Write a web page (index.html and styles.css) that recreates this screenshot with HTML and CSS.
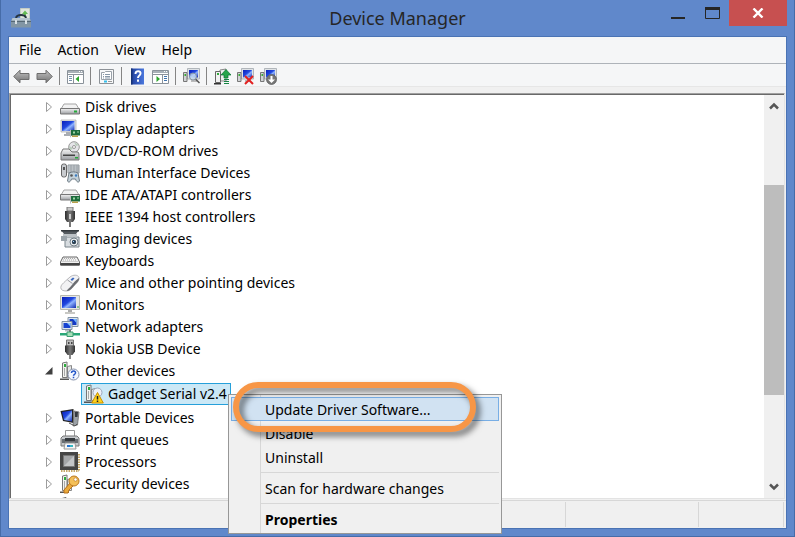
FILE: index.html
```html
<!DOCTYPE html>
<html lang="en">
<head>
<meta charset="utf-8">
<title>Device Manager</title>
<link rel="stylesheet" href="styles.css">
</head>
<body>
<svg class="sprite" aria-hidden="true">
  <defs>
    <linearGradient id="steel" x1="0" y1="0" x2="0" y2="1"><stop offset="0" stop-color="#f4f4f4"/><stop offset="1" stop-color="#9b9ea2"/></linearGradient>
    <linearGradient id="screen" x1="0" y1="0" x2="1" y2="1"><stop offset="0" stop-color="#0a1fb8"/><stop offset=".45" stop-color="#2148e0"/><stop offset=".6" stop-color="#8fb4ff"/><stop offset="1" stop-color="#1028b0"/></linearGradient>
    <linearGradient id="dark" x1="0" y1="0" x2="1" y2="0"><stop offset="0" stop-color="#2c2c2c"/><stop offset=".5" stop-color="#7a7a7a"/><stop offset="1" stop-color="#333"/></linearGradient>
    <linearGradient id="arrow" x1="0" y1="0" x2="0" y2="1"><stop offset="0" stop-color="#c2c2c2"/><stop offset="1" stop-color="#717171"/></linearGradient>
    <linearGradient id="book" x1="0" y1="0" x2="1" y2="0"><stop offset="0" stop-color="#203f9c"/><stop offset="1" stop-color="#4a77dd"/></linearGradient>
  </defs>
  <symbol id="i-closed" viewBox="0 0 8 12"><path d="M1.500 1.500v9L6.500 6z" fill="#fff" stroke="#9c9c9c"/></symbol>
  <symbol id="i-open" viewBox="0 0 8 12"><path d="M7.500 2v7.500H0z" fill="#404040"/></symbol>
  <symbol id="i-card" viewBox="0 0 10 8"><path d="M0 0h1v8H0z" fill="#bbb"/><path d="M1 .5h9v5.500H1z" fill="#1d6b3c"/><path d="M3 2h2v2H3zM7 2h2v1H7z" fill="#9fd8a8"/><path d="M2 6h6v1.500H2z" fill="#b9a04a"/></symbol>
  <symbol id="i-disk" viewBox="0 0 20 20"><path d="M4 7h12l3 5H1z" fill="#f3f3f3" stroke="#a5a5a5"/><path d="M.5 11.500h19V17H.5z" fill="url(#steel)" stroke="#777"/><path d="M14 13.500h3v2h-3z" fill="#25a93a"/></symbol>
  <symbol id="i-display" viewBox="0 0 20 20"><path d="M1 1h15v12H1z" fill="#e2e4e6" stroke="#aaa" stroke-width=".7"/><path d="M2 2h12.500v10H2z" fill="url(#screen)"/><path d="M6 13h4v2H6zM4 15h9v2H4z" fill="#a9adb2"/><use href="#i-card" x="10" y="10.500" width="10" height="8"/></symbol>
  <symbol id="i-dvd" viewBox="0 0 20 20"><circle cx="14" cy="6" r="5.300" fill="#e5e5e9" stroke="#999"/><path d="M14 1l2 4 3-1zM10 10l3-3-4-2z" fill="#b9cdbb"/><circle cx="14" cy="6" r="1.500" fill="#fff" stroke="#999"/><path d="M3 8h6l3 3h6l1 2v6H1v-7z" fill="url(#steel)" stroke="#777"/><path d="M3 13.500h12v1.500H3z" fill="#444"/><path d="M15 16h3v1.500h-3z" fill="#25a93a"/></symbol>
  <symbol id="i-hid" viewBox="0 0 20 20"><path d="M8 2h11v8H8z" fill="#d5dade" stroke="#8d9499"/><path d="M9 4h10M9 6h10M9 8h10M11 2v8M14 2v8M17 2v8" stroke="#8d9499" stroke-width=".7"/><rect x="1.500" y="1" width="5" height="13" rx="2" fill="#c9ccd0" stroke="#666"/><path d="M3 4h2v3H3z" fill="#555"/><path d="M9 10c3-1.500 6-1.500 9 0l1.500 8c-1 2-3 1-4-2h-4c-1 3-3 4-4 2z" fill="#c4d2da" stroke="#6f7b84"/><circle cx="11.500" cy="12.500" r="1.300" fill="#555"/><circle cx="16" cy="12.500" r="1.200" fill="#3b7dc0"/></symbol>
  <symbol id="i-ide" viewBox="0 0 20 20"><path d="M4 5h12l3 5H1z" fill="#f1f1f1" stroke="#a5a5a5"/><path d="M.5 9.500h19V15H.5z" fill="url(#steel)" stroke="#777"/><use href="#i-card" x="10" y="10" width="10" height="9"/></symbol>
  <symbol id="i-plug" viewBox="0 0 20 20"><path d="M6.500 1h7v6h-7z" fill="#bdbdbd" stroke="#777"/><path d="M8 3h1.500v2H8zM11 3h1.500v2H11z" fill="#444"/><path d="M5 6.500h10v6L12.500 16h-5L5 12.500z" fill="url(#dark)"/><path d="M9 16h2v4H9z" fill="#888"/></symbol>
  <symbol id="i-fire" viewBox="0 0 20 20"><path d="M7 0h6v4H7z" fill="#c7c7c7" stroke="#777"/><path d="M5 4h10v8l-2 3H7l-2-3z" fill="url(#dark)"/><path d="M9 7h2v5H9z" fill="#ccc"/><path d="M9 15h2v5H9z" fill="#777"/></symbol>
  <symbol id="i-camera" viewBox="0 0 20 20"><path d="M1 1h18l-3 4H4z" fill="#555b60"/><path d="M1 1h18v1.500H1z" fill="#343a3e"/><path d="M3 5h14v2H3z" fill="#bbc1c5"/><path d="M5 8h14v10H5z" fill="#d7dce0" stroke="#7b858c"/><path d="M1 7h6v5H1z" fill="#9ba4aa"/><circle cx="14" cy="13" r="4" fill="#f2f4f5" stroke="#737f87"/><circle cx="14" cy="13" r="2.200" fill="#2d4254"/><path d="M13 12h1v1h-1z" fill="#9bd1ff"/></symbol>
  <symbol id="i-keyboard" viewBox="0 0 20 20"><path d="M3 6h14l2.500 5v3H.5v-3z" fill="#f2f2f2" stroke="#666"/><path d="M.5 12h19v2.500H.5z" fill="#444"/><path d="M4 7.500h12M3 9h14M2.500 10.500h15" stroke="#aaa" stroke-dasharray="1 1"/></symbol>
  <symbol id="i-mouse" viewBox="0 0 20 20"><path d="M.8 14.500C.8 12 3 10.500 5.500 8L10 4c3-2.500 8-2.500 9 .5.800 2.800-3 6-5.500 9-1.800 2.200-4 4.500-7 4.500-3.500 0-5.700-1-5.700-3.500z" fill="#f2f2f4" stroke="#a6a6aa" stroke-width=".8"/><path d="M19 5c.8 2.800-3 5.500-5.500 8.500-2 2.500-4 4.500-7 4.500 1-2 3-3 5-5.500S15 7.500 19 5z" fill="#6b6d72"/><path d="M7.500 7l5 3.500" stroke="#9a9da3"/><path d="M10.500 6.500l2.500-2 1.500 1-2.500 2.500z" fill="#3b69bf"/></symbol>
  <symbol id="i-monitor" viewBox="0 0 20 20"><path d="M.5.500h19v14H.5z" fill="#e5e6e2" stroke="#b8b8b0"/><path d="M2 2h14v11H2z" fill="url(#screen)"/><path d="M17.500 11h1v2h-1z" fill="#2ea043"/><path d="M8 15h4v2H8z" fill="#aaa"/><path d="M5 17h10v2H5z" fill="#c8c8c4"/></symbol>
  <symbol id="i-network" viewBox="0 0 20 20"><path d="M8 .5h10v9H8z" fill="#dce5ee" stroke="#8192a4"/><path d="M9.500 2h7v6h-7z" fill="#1439c6"/><path d="M13 2h3.500v4z" fill="#75b8ff"/><path d="M2 4.500h10v8H2z" fill="#dce5ee" stroke="#8192a4"/><path d="M3.500 6h7v5h-7z" fill="#1542d1"/><path d="M7 6h3.500v3.500z" fill="#8ec9ff"/><path d="M5 13h4v1.500H5z" fill="#b5bdc5"/><path d="M9 13h2v3H9z" fill="#777"/><path d="M0 16h20v2.500H0z" fill="#2aa878"/><path d="M7 15h6v4.500H7z" fill="#a7e0b9" stroke="#3a9d72"/></symbol>
  <symbol id="i-tower" viewBox="0 0 20 20"><path d="M7.500 5.500l4-1v12h-4z" fill="#e4e6e6" stroke="#888"/><path d="M2.500 2L7 1v15.500H2.500z" fill="#f3f3f0" stroke="#777"/><path d="M4 3h2v3H4z" fill="#2dac3d"/><path d="M4.500 7v8" stroke="#aaa"/><path d="M0 17.500h9V19H0z" fill="#555"/></symbol>
  <symbol id="i-other" viewBox="0 0 20 20"><use href="#i-tower"/><circle cx="13.500" cy="13.500" r="5.500" fill="#f4f7ff" stroke="#8490aa"/><path d="M11.500 12c0-3 4.500-2.500 4 .2-.3 1.300-2 1.200-2 2.600M13.500 15.700v1.500" fill="none" stroke="#2456c8" stroke-width="1.500"/></symbol>
  <symbol id="i-warn" viewBox="0 0 20 20"><use href="#i-tower"/><circle cx="13.500" cy="8.500" r="4.500" fill="#eef1f8" stroke="#9ba6bb"/><path d="M13.500 8.500L19.300 19H7.700z" fill="#ffd21c" stroke="#c89000" stroke-linejoin="round"/><path d="M13.500 12v3.500M13.500 16.500V18" stroke="#222" stroke-width="1.500"/></symbol>
  <symbol id="i-portable" viewBox="0 0 20 20"><path d="M.5 3l13-2v14L3 13z" fill="#222"/><path d="M2 4l10-1.500v11L4 12z" fill="url(#screen)"/><path d="M14 3l5 1-1.500 13-4.500 1z" fill="#9ba1a6" stroke="#666" stroke-width=".8"/><path d="M15 4h3l-.5 5H15z" fill="#34393e"/><path d="M9 15l6 3 2-2" fill="none" stroke="#555"/></symbol>
  <symbol id="i-printer" viewBox="0 0 20 20"><path d="M5.500.500h9V9h-9z" fill="#fff" stroke="#999"/><path d="M1 8l2-2h14l2 2v8H1z" fill="#c6c9cc" stroke="#777"/><path d="M2 9h16v4H2z" fill="#686d72"/><path d="M5 8h10v3H5z" fill="#35393d"/><path d="M5 13h10l1 6H4z" fill="#f7f7f7" stroke="#999"/><path d="M7 15h3v2H7z" fill="#2576d2"/><path d="M10 15h3v2h-3z" fill="#36b7c3"/></symbol>
  <symbol id="i-cpu" viewBox="0 0 20 20"><path d="M1 19h18M19 2v17" stroke="#b28b37" stroke-width="1.500" stroke-dasharray="1.500 1"/><path d="M0 0h18v18H0z" fill="#454545"/><path d="M3.500 3.500h11v11h-11z" fill="#c4c6c8" stroke="#777"/><path d="M4 4h10L4 14z" fill="#a4a6a8"/></symbol>
  <symbol id="i-key" viewBox="0 0 20 20"><use href="#i-tower"/><path d="M10 9L4 16v3h4l1-3 4-4z" fill="#eaa93b" stroke="#b6711d"/><circle cx="14" cy="7" r="5" fill="#f4bf57" stroke="#ba7821"/><circle cx="15.500" cy="5.500" r="1.700" fill="#fff" stroke="#ba7821" stroke-width=".7"/></symbol>
  <symbol id="i-sensor" viewBox="0 0 20 20"><path d="M2 6V2.500l4-1V6zM9 6l1-3h5l1 3z" fill="#c9c9c9" stroke="#666"/></symbol>
  <symbol id="i-toolbox" viewBox="0 0 20 20"><path d="M9.500.500h9v13h-9z" fill="#dfe5dc" stroke="#c4ccc4"/><path d="M14 2.500l3 3.500h-2v3h-2V6h-2z" fill="#63ba52"/><path d="M5 10c1-4 9-4 10 0" fill="none" stroke="#263541" stroke-width="2"/><path d="M1.500 10h17l1.500 3v6.500H0V13z" fill="#8296a5"/><path d="M1.500 10h17l1 2.500H.5z" fill="#b7c5cf"/><path d="M0 13h20v1H0z" fill="#566874"/><path d="M4 12h2v4H4zM14 12h2v4h-2z" fill="#d7e0e5"/></symbol>
  <symbol id="i-back" viewBox="0 0 17 17"><path d="M.7 8.500L7 2.200v3.300h9v6H7v3.300z" fill="url(#arrow)" stroke="#6d6d6d" stroke-linejoin="round"/></symbol>
  <symbol id="i-panel" viewBox="0 0 17 17"><path d="M.5 2.500h16v13H.5z" fill="#fff" stroke="#8a929a"/><path d="M1 3h15v2H1z" fill="#a8b0b7"/><path d="M12 3.500h1m1 0h1" stroke="#fff"/><path d="M1 6.500h15" stroke="#8a929a"/></symbol>
  <symbol id="i-tree" viewBox="0 0 17 17"><use href="#i-panel"/><path d="M6.500 7v8" stroke="#8a929a"/><path d="M2 8.500h3M2 10.500h3M2 12.500h3" stroke="#7993ad"/><path d="M12 8v6l-3.500-3z" fill="#2ca52b"/></symbol>
  <symbol id="i-action" viewBox="0 0 17 17"><use href="#i-panel"/><path d="M10.500 7v8" stroke="#8a929a"/><path d="M12 8.500h3M12 10.500h3M12 12.500h3" stroke="#3f73ad"/><path d="M4.500 8v6L8 11z" fill="#2ca52b"/></symbol>
  <symbol id="i-props" viewBox="0 0 17 17"><path d="M1.500 1.500h14v14h-14z" fill="#f8f9fa" stroke="#8d9297"/><path d="M3.500 4.500h3l1-1h6v8h-10z" fill="#fff" stroke="#9aa2aa"/><path d="M5 6.500h1m1 0h5M5 8.500h1m1 0h5M5 10h1m1 0h5" stroke="#8999a9"/><path d="M6 12.500h3v2H6z" fill="#35bde9"/><path d="M10 13.500h4" stroke="#999"/></symbol>
  <symbol id="i-help" viewBox="0 0 17 17"><path d="M2 .5h13v16H2z" fill="url(#book)"/><path d="M2 .5h1.500v16H2z" fill="#173276"/><path d="M6.500 6c0-4 5.500-3.500 5-.3-.3 2-2.500 2-2.500 4.300M9 11.500v2.300" fill="none" stroke="#fff" stroke-width="2"/></symbol>
  <symbol id="i-pc" viewBox="0 0 17 17"><path d="M4.500.500h12V11h-12z" fill="#dfe3e6" stroke="#a2a8ad" stroke-width=".8"/><path d="M6 2h9v7.500H6z" fill="url(#screen)"/><path d="M8 12h6v2H8z" fill="#bbb"/><path d="M.5 4.500h3.500v9H.5z" fill="#d1d4d6" stroke="#777"/><path d="M1.500 6H3v2H1.500z" fill="#37ad35"/></symbol>
  <symbol id="i-scan" viewBox="0 0 17 17"><use href="#i-pc"/><path d="M12 10.500l4.500 4.500" stroke="#555" stroke-width="1.500"/><circle cx="10" cy="8.500" r="3.500" fill="#c6dcf0" fill-opacity=".75" stroke="#8795a3"/></symbol>
  <symbol id="i-update" viewBox="0 0 17 17"><path d="M6 2l6-1v12H6z" fill="#eee" stroke="#888"/><path d="M1.500 3.500h5v11h-5z" fill="#f1f1f1" stroke="#666"/><path d="M3 5h2v2H3z" fill="#30a83b"/><path d="M0 15h7v1.500H0z" fill="#333"/><path d="M12 1.500l5 5.500h-3v3h-4V7H7z" fill="#27a44b" stroke="#087231" stroke-width=".7"/><path d="M10 11.500h5M10 13.500h5M10 15.500h5" stroke="#168443"/></symbol>
  <symbol id="i-remove" viewBox="0 0 17 17"><use href="#i-pc"/><path d="M8 8l8 8M16 8l-8 8" stroke="#e22020" stroke-width="2"/></symbol>
  <symbol id="i-disable" viewBox="0 0 17 17"><use href="#i-pc"/><circle cx="11.500" cy="11.500" r="5" fill="#777" stroke="#555" stroke-width=".7"/><path d="M10.500 8h2v3.500H15l-3.500 3.500L8 11.500h2.500z" fill="#fff"/></symbol>
</svg>

<main class="window">
  <header class="titlebar">
    <svg class="app-icon"><use href="#i-toolbox"/></svg>
    <h1 class="title">Device Manager</h1>
    <div class="controls">
      <button class="control" type="button" aria-label="Minimize"><svg width="14" height="12"><path d="M0 10h14v2H0z" fill="#262626"/></svg></button>
      <button class="control" type="button" aria-label="Maximize"><svg width="15" height="12"><path d="M.5.500h14v11H.5z" fill="none" stroke="#262626"/><path d="M0 0h15v3H0z" fill="#262626"/></svg></button>
      <button class="control close" type="button" aria-label="Close"><svg width="12" height="10"><path d="M1.500.500l9 9M10.500.500l-9 9" stroke="#fff" stroke-width="2.400"/></svg></button>
    </div>
  </header>

  <div class="client">
    <nav class="menubar" aria-label="Menu bar">
      <button type="button">File</button>
      <button type="button">Action</button>
      <button type="button">View</button>
      <button type="button">Help</button>
    </nav>

    <div class="toolbar" role="toolbar" aria-label="Tools">
      <button class="tool" type="button" aria-label="Back"><svg><use href="#i-back"/></svg></button>
      <button class="tool forward" type="button" aria-label="Forward"><svg><use href="#i-back"/></svg></button>
      <span class="divider"></span>
      <button class="tool" type="button" aria-label="Show or hide console tree"><svg><use href="#i-tree"/></svg></button>
      <span class="divider"></span>
      <button class="tool" type="button" aria-label="Properties"><svg><use href="#i-props"/></svg></button>
      <span class="divider"></span>
      <button class="tool" type="button" aria-label="Help"><svg><use href="#i-help"/></svg></button>
      <button class="tool" type="button" aria-label="Show or hide action pane"><svg><use href="#i-action"/></svg></button>
      <span class="divider"></span>
      <button class="tool" type="button" aria-label="Scan for hardware changes"><svg><use href="#i-scan"/></svg></button>
      <span class="divider"></span>
      <button class="tool" type="button" aria-label="Update driver software"><svg><use href="#i-update"/></svg></button>
      <button class="tool" type="button" aria-label="Uninstall"><svg><use href="#i-remove"/></svg></button>
      <button class="tool" type="button" aria-label="Disable"><svg><use href="#i-disable"/></svg></button>
    </div>

    <section class="pane">
      <ul class="tree">
        <li class="row"><svg class="twisty"><use href="#i-closed"/></svg><svg class="icon"><use href="#i-disk"/></svg><span>Disk drives</span></li>
        <li class="row"><svg class="twisty"><use href="#i-closed"/></svg><svg class="icon"><use href="#i-display"/></svg><span>Display adapters</span></li>
        <li class="row"><svg class="twisty"><use href="#i-closed"/></svg><svg class="icon"><use href="#i-dvd"/></svg><span>DVD/CD-ROM drives</span></li>
        <li class="row"><svg class="twisty"><use href="#i-closed"/></svg><svg class="icon"><use href="#i-hid"/></svg><span>Human Interface Devices</span></li>
        <li class="row"><svg class="twisty"><use href="#i-closed"/></svg><svg class="icon"><use href="#i-ide"/></svg><span>IDE ATA/ATAPI controllers</span></li>
        <li class="row"><svg class="twisty"><use href="#i-closed"/></svg><svg class="icon"><use href="#i-fire"/></svg><span>IEEE 1394 host controllers</span></li>
        <li class="row"><svg class="twisty"><use href="#i-closed"/></svg><svg class="icon"><use href="#i-camera"/></svg><span>Imaging devices</span></li>
        <li class="row"><svg class="twisty"><use href="#i-closed"/></svg><svg class="icon"><use href="#i-keyboard"/></svg><span>Keyboards</span></li>
        <li class="row"><svg class="twisty"><use href="#i-closed"/></svg><svg class="icon"><use href="#i-mouse"/></svg><span>Mice and other pointing devices</span></li>
        <li class="row"><svg class="twisty"><use href="#i-closed"/></svg><svg class="icon"><use href="#i-monitor"/></svg><span>Monitors</span></li>
        <li class="row"><svg class="twisty"><use href="#i-closed"/></svg><svg class="icon"><use href="#i-network"/></svg><span>Network adapters</span></li>
        <li class="row"><svg class="twisty"><use href="#i-closed"/></svg><svg class="icon"><use href="#i-plug"/></svg><span>Nokia USB Device</span></li>
        <li>
          <div class="row"><svg class="twisty"><use href="#i-open"/></svg><svg class="icon"><use href="#i-other"/></svg><span>Other devices</span></div>
          <ul class="branch">
            <li class="selected"><svg class="icon"><use href="#i-warn"/></svg><span>Gadget Serial v2.4</span></li>
          </ul>
        </li>
        <li class="row"><svg class="twisty"><use href="#i-closed"/></svg><svg class="icon"><use href="#i-portable"/></svg><span>Portable Devices</span></li>
        <li class="row"><svg class="twisty"><use href="#i-closed"/></svg><svg class="icon"><use href="#i-printer"/></svg><span>Print queues</span></li>
        <li class="row"><svg class="twisty"><use href="#i-closed"/></svg><svg class="icon"><use href="#i-cpu"/></svg><span>Processors</span></li>
        <li class="row"><svg class="twisty"><use href="#i-closed"/></svg><svg class="icon"><use href="#i-key"/></svg><span>Security devices</span></li>
        <li class="row"><svg class="twisty"><use href="#i-closed"/></svg><svg class="icon"><use href="#i-sensor"/></svg></li>
      </ul>
      <div class="scrollbar">
        <button type="button" aria-label="Scroll up"><svg width="10" height="8"><path d="M1 6.500l4-4 4 4" fill="none" stroke="#555" stroke-width="2.500"/></svg></button>
        <div class="track"><div class="thumb"></div></div>
        <button type="button" aria-label="Scroll down"><svg width="10" height="8"><path d="M1 1.500l4 4 4-4" fill="none" stroke="#555" stroke-width="2.500"/></svg></button>
      </div>
    </section>

    <footer class="statusbar"><span></span><span></span><span></span></footer>
  </div>

  <div class="context-menu" role="menu">
    <button class="item active" type="button" role="menuitem">Update Driver Software...</button>
    <button class="item" type="button" role="menuitem">Disable</button>
    <button class="item" type="button" role="menuitem">Uninstall</button>
    <hr>
    <button class="item" type="button" role="menuitem">Scan for hardware changes</button>
    <hr>
    <button class="item default" type="button" role="menuitem">Properties</button>
    <span class="callout"></span>
  </div>
</main>
</body>
</html>
```

FILE: styles.css
```css
* { box-sizing: border-box; }

body {
  margin: 0;
  color: #000;
  font: 14px/22px "Noto Sans", "Open Sans", sans-serif;
}

button {
  margin: 0;
  padding: 0;
  border: 0;
  background: none;
  color: inherit;
  font: inherit;
}

svg { display: block; flex: none; }
ul { margin: 0; padding: 0; list-style: none; }

.sprite { position: absolute; width: 0; height: 0; }

.window {
  position: relative;
  display: flex;
  flex-direction: column;
  height: 100vh;
  padding: 0 7px 7px;
  border: 1px solid #466ca8;
  border-top: 0;
  background: #6088cb;
}

.titlebar {
  display: grid;
  grid-template-columns: 1fr auto 1fr;
  height: 36px;
}

.app-icon { width: 20px; height: 20px; margin: 8px 0 0 3px; }

.title {
  margin: 0;
  color: #262626;
  font-size: 18px;
  font-weight: 400;
  line-height: 36px;
}

.controls { display: flex; justify-content: flex-end; align-items: flex-start; }

.control {
  display: flex;
  justify-content: center;
  align-items: center;
  width: 34px;
  height: 26px;
}

.close { width: 58px; background: #c75050; }

.client {
  display: flex;
  flex: 1;
  flex-direction: column;
  min-height: 0;
  border: 1px solid #4a73b4;
  background: #f0f0f0;
}

.menubar {
  display: flex;
  gap: 16px;
  height: 27px;
  padding: 0 10px;
  border-bottom: 1px solid #aeb3b9;
  background: #f5f6f7;
  line-height: 26px;
}

.toolbar {
  display: flex;
  height: 23px;
  padding: 0 1px;
  border-bottom: 1px solid #e6e6e6;
  background: #f5f6f7;
}

.tool {
  display: flex;
  justify-content: center;
  align-items: center;
  width: 23px;
  height: 24px;
}

.tool svg { width: 17px; height: 17px; }
.forward svg { transform: scaleX(-1); }

.divider {
  width: 8px;
  height: 18px;
  margin-top: 3px;
  background: linear-gradient(#858585, #858585) 3px 0 / 1px 100% no-repeat;
}

.pane {
  display: flex;
  flex: 1;
  min-height: 0;
  margin: 6px 1px 1px 0;
  border: 1px solid #e3e3e3;
  border-top-color: #a0a0a0;
  border-left-color: #a0a0a0;
  background: #fff;
  box-shadow: inset 1px 1px #696969;
}

.tree { flex: 1; overflow: hidden; margin-top: 1px; padding: 1px 0 0 35px; }

.row { display: flex; height: 22px; }
.twisty { width: 8px; height: 12px; margin: 5px 7px 0 0; }
.icon { width: 20px; height: 20px; margin: 1px 5px 0 0; }

.branch { display: flex; height: 25px; padding: 1px 0 2px 36px; }

.selected {
  display: flex;
  padding: 0 3px 0 2px;
  border: 1px solid #26a0da;
  background: #cbe8f6;
  line-height: 20px;
}

.selected .icon { margin: 0 4px 0 0; }

.scrollbar {
  display: flex;
  flex-direction: column;
  width: 20px;
  margin-top: 1px;
  background: #f0f0f0;
}

.scrollbar button {
  display: flex;
  justify-content: center;
  align-items: center;
  height: 22px;
}

.track {
  display: grid;
  flex: 1;
  grid-template-rows: 68fr 210fr 81fr;
}

.thumb { grid-row: 2; background: #bdbdbd; }

.statusbar {
  display: grid;
  grid-template-columns: 1fr 133px 85px;
  height: 28px;
  padding: 1px 2px 1px 0;
  border-top: 1px solid #d7d7d7;
}

.statusbar span { border-right: 1px solid #d7d7d7; }

.context-menu {
  position: absolute;
  top: 394px;
  left: 227px;
  width: 274px;
  padding: 2px;
  border: 1px solid #979797;
  background: linear-gradient(90deg, transparent 31px, #d7d7d7 31px, #d7d7d7 32px, transparent 32px) #f0f0f0;
}

.item {
  display: block;
  width: 100%;
  height: 24px;
  padding: 1px 0 0 34px;
  text-align: left;
}

.active { padding-left: 33px; border: 1px solid #78aee5; background: #d1e2f2; }
.default { font-weight: 700; }

.context-menu hr {
  height: 1px;
  margin: 3px 0 3px 30px;
  border: 0;
  background: #d7d7d7;
}

.callout {
  position: absolute;
  top: -13px;
  left: 4px;
  width: 243px;
  height: 50px;
  border: 6px solid #f79646;
  border-radius: 25px;
  filter: drop-shadow(4px 4px 3px rgb(0 0 0 / 55%));
  pointer-events: none;
}
```
